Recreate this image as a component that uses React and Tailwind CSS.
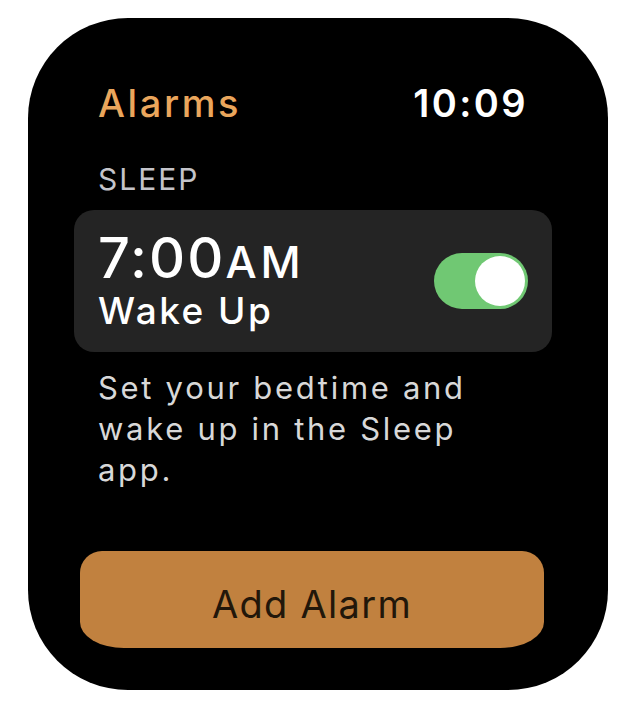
import React from 'react';

const Toggle = () => (
  <div className="w-[94px] h-[56px] rounded-full bg-[#70c873] flex items-center justify-end pr-[3px]">
    <div className="w-[50px] h-[50px] rounded-full bg-white" />
  </div>
);

const App = () => {
  return (
    <div className="w-[636px] h-[714px] bg-white pt-[18px] pl-[28px]" style={{ fontFamily: 'Inter, "Noto Sans", sans-serif' }}>
      <div className="w-[580px] h-[672px] bg-black rounded-[100px] overflow-hidden pl-[46px] pr-[56px] pt-[62px]">
        <div className="flex items-center justify-between pl-[24px] pr-[24px] h-[46px]">
          <span className="text-[38px] font-medium text-[#eaa65c] tracking-[2.6px]">Alarms</span>
          <span className="text-[38px] font-semibold text-white tracking-[2.4px]">10:09</span>
        </div>

        <div className="mt-[37px] pl-[24px] text-[30px] leading-[32px] text-[#c4c4ca] tracking-[2px]">SLEEP</div>

        <div className="mt-[15px] h-[142px] bg-[#242424] rounded-[20px] flex items-center justify-between pl-[24px] pr-[24px]">
          <div className="flex flex-col">
            <div className="flex items-baseline text-white font-medium leading-[56px]">
              <span className="text-[56px] tracking-[2px]">7:00</span>
              <span className="text-[44px] tracking-[4px]">AM</span>
            </div>
            <div className="text-[37px] leading-[42px] text-white font-medium tracking-[2.5px]">Wake Up</div>
          </div>
          <Toggle />
        </div>

        <div className="mt-[15px] pl-[24px] text-[31px] leading-[41px] text-[#d8d8d8] tracking-[2.7px]">
          <span className="block">Set your bedtime and</span>
          <span className="block">wake up in the Sleep</span>
          <span className="block">app.</span>
        </div>

        <div className="mt-[61px] ml-[6px] w-[464px] h-[97px] bg-[#c1813f] rounded-t-[22px] rounded-bl-[44px_26px] rounded-br-[44px_26px] flex items-center justify-center pt-[10px]">
          <span className="text-[38px] text-[#22170a] tracking-[1.3px]">Add Alarm</span>
        </div>
      </div>
    </div>
  );
};

export default App;
